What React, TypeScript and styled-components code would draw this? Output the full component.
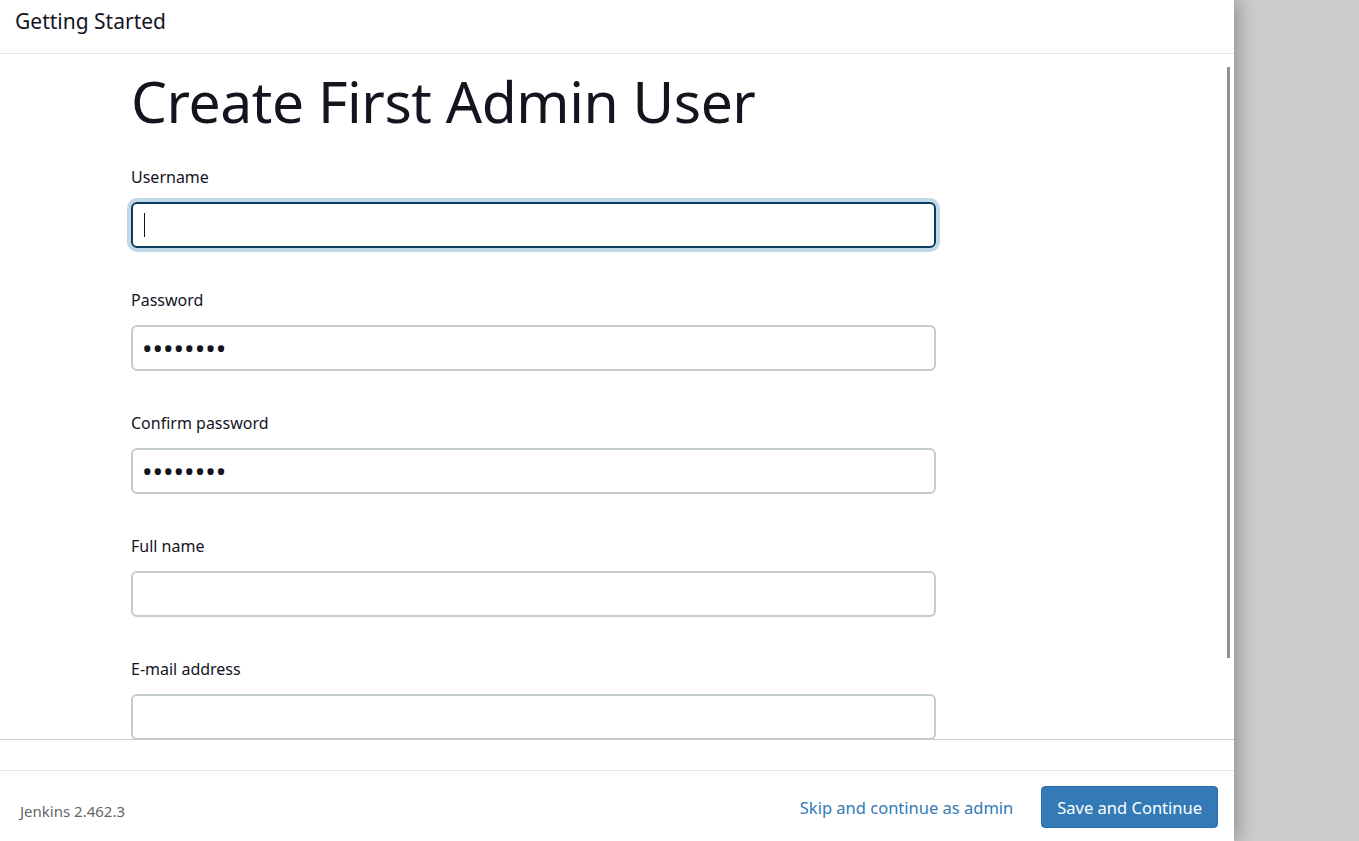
import styled, { createGlobalStyle } from 'styled-components';

const GlobalStyle = createGlobalStyle`
  html, body {
    margin: 0;
    padding: 0;
    background-color: #cccccc;
    font-family: "Noto Sans", "Open Sans", sans-serif;
    color: #14141f;
    overflow: hidden;
  }
  * {
    box-sizing: border-box;
  }
`;

const Page = styled.div`
  height: 841px;
  display: flex;
`;

const Dialog = styled.div`
  width: 1234px;
  height: 100%;
  background-color: white;
  box-shadow: rgba(0, 0, 0, 0.3) 4px 0px 18px;
  display: flex;
  flex-direction: column;
`;

const Header = styled.div`
  height: 54px;
  border-bottom: 1px solid #e5e5e5;
  padding: 7px 15px 0;
  font-size: 21px;
  line-height: 28px;
  color: #14141f;
`;

const Body = styled.div`
  position: relative;
  height: 686px;
  overflow: hidden;
  border-bottom: 1px solid #cccccc;
`;

const ScrollThumb = styled.div`
  position: absolute;
  right: 4px;
  top: 13px;
  width: 3px;
  height: 591px;
  background-color: #8f8f8f;
`;

const Form = styled.div`
  padding: 12px 0 0 131px;
  width: 936px;
`;

const Title = styled.h1`
  margin: 0 0 30px;
  font-size: 57px;
  font-weight: 400;
  line-height: 1.25;
  color: #14141f;
  letter-spacing: -0.45px;
`;

const Field = styled.div`
  display: flex;
  flex-direction: column;
  gap: 15px;
  margin-bottom: 42px;
`;

const Label = styled.label`
  font-size: 16px;
  line-height: 20px;
  color: #14141f;
`;

const Input = styled.input<{ $secret?: boolean }>`
  width: 805px;
  height: 46px;
  border: 2px solid #c3ccd1;
  border-radius: 6px;
  padding: 0 ${(p) => (p.$secret ? '9px' : '11px')};
  font-family: inherit;
  font-size: ${(p) => (p.$secret ? '28px' : '16px')};
  color: #14141f;
  outline: none;
  background-color: white;
`;

const FocusedBox = styled.div`
  width: 805px;
  height: 46px;
  border: 2px solid #0b3c5d;
  border-radius: 6px;
  box-shadow: 0 0 0 4px #c0d9e8;
  padding: 0 11px;
  display: flex;
  align-items: center;
`;

const Caret = styled.span`
  display: inline-block;
  width: 1px;
  height: 24px;
  background-color: #14141f;
`;

const Spacer = styled.div`
  height: 31px;
  border-bottom: 1px solid #e5e5e5;
`;

const Footer = styled.div`
  flex: 1;
  display: flex;
  align-items: center;
  justify-content: space-between;
  padding: 2px 16px 0 20px;
`;

const Version = styled.span`
  font-size: 15px;
  color: #666666;
  margin-top: 8px;
`;

const Actions = styled.div`
  display: flex;
  align-items: center;
  gap: 28px;
`;

const SkipLink = styled.a`
  font-size: 16.5px;
  color: #337ab7;
  text-decoration: none;
  cursor: pointer;
`;

const PrimaryButton = styled.button`
  height: 42px;
  padding: 0 15px;
  background-color: #337ab7;
  border: 1px solid #2e6da4;
  border-radius: 4px;
  color: white;
  font-family: inherit;
  font-size: 16.5px;
  cursor: pointer;
`;

const fields = [
  { label: 'Username', type: 'text', value: '', focused: true },
  { label: 'Password', type: 'password', value: 'admin123' },
  { label: 'Confirm password', type: 'password', value: 'admin123' },
  { label: 'Full name', type: 'text', value: '' },
  { label: 'E-mail address', type: 'email', value: '' },
];

const App = () => {
  return (
    <>
      <GlobalStyle />
      <Page>
        <Dialog>
          <Header>Getting Started</Header>
          <Body>
            <Form>
              <Title>Create First Admin User</Title>
              {fields.map((f) => (
                <Field key={f.label}>
                  <Label>{f.label}</Label>
                  {f.focused ? (
                    <FocusedBox>
                      <Caret />
                    </FocusedBox>
                  ) : (
                    <Input
                      type={f.type}
                      defaultValue={f.value}
                      $secret={f.type === 'password'}
                      readOnly
                    />
                  )}
                </Field>
              ))}
            </Form>
            <ScrollThumb />
          </Body>
          <Spacer />
          <Footer>
            <Version>Jenkins 2.462.3</Version>
            <Actions>
              <SkipLink>Skip and continue as admin</SkipLink>
              <PrimaryButton>Save and Continue</PrimaryButton>
            </Actions>
          </Footer>
        </Dialog>
      </Page>
    </>
  );
};

export default App;
